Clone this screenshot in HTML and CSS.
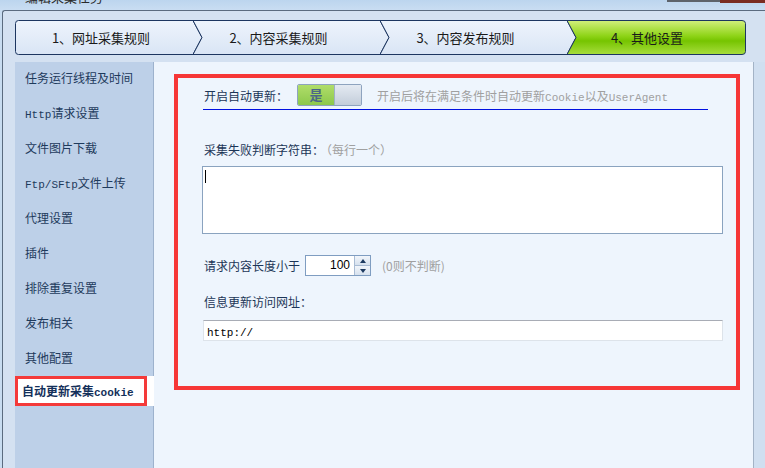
FILE: index.html
```html
<!DOCTYPE html>
<html lang="zh-CN">
<head>
    <meta charset="UTF-8">
    <title>其他设置</title>
    <link rel="stylesheet" href="styles.css">
</head>
<body>
    <div class="titlebar">
        <span class="title">编辑采集任务</span>
        <div class="caption-btns">
            <span class="cap-min"></span>
            <span class="cap-close"></span>
        </div>
    </div>
    <div class="window">
        <!-- 步骤条 -->
        <div class="steps">
            <svg class="steps-bg" width="731" height="35" viewBox="0 0 731 35">
                <defs>
                    <linearGradient id="gLight" x1="0" y1="0" x2="0" y2="1">
                        <stop offset="0" stop-color="#eef4fc"/>
                        <stop offset="1" stop-color="#d9e5f5"/>
                    </linearGradient>
                    <linearGradient id="gGreen" x1="0" y1="0" x2="0" y2="1">
                        <stop offset="0" stop-color="#d2f07c"/>
                        <stop offset="0.45" stop-color="#8fd418"/>
                        <stop offset="0.6" stop-color="#76c400"/>
                        <stop offset="1" stop-color="#a8de3e"/>
                    </linearGradient>
                </defs>
                <g stroke="#1d3660" stroke-width="1" stroke-linejoin="round">
                    <path fill="url(#gLight)" d="M3.5,0.5 H178 L187,17.5 L178,34.5 H3.5 Q0.5,34.5 0.5,31.5 V3.5 Q0.5,0.5 3.5,0.5 Z"/>
                    <path fill="url(#gLight)" d="M178,0.5 H365 L374,17.5 L365,34.5 H178 L187,17.5 Z"/>
                    <path fill="url(#gLight)" d="M365,0.5 H552 L561,17.5 L552,34.5 H365 L374,17.5 Z"/>
                    <path fill="url(#gGreen)" d="M552,0.5 H727 Q730.5,0.5 730.5,3.5 V31.5 Q730.5,34.5 727,34.5 H552 L561,17.5 Z"/>
                </g>
            </svg>
            <div class="step-labels">
                <span class="step">1、网址采集规则</span>
                <span class="step">2、内容采集规则</span>
                <span class="step">3、内容发布规则</span>
                <span class="step step-last">4、其他设置</span>
            </div>
        </div>

        <div class="main">
            <ul class="side-nav">
                <li>任务运行线程及时间</li>
                <li><span class="latin">Http</span>请求设置</li>
                <li>文件图片下载</li>
                <li><span class="latin">Ftp/SFtp</span>文件上传</li>
                <li>代理设置</li>
                <li>插件</li>
                <li>排除重复设置</li>
                <li>发布相关</li>
                <li>其他配置</li>
                <li class="active"><span class="mark">自动更新采集<span class="latin">cookie</span></span></li>
            </ul>

            <div class="panel">
                <div class="focus-box">
                    <div class="auto-row">
                        <span class="label">开启自动更新：</span>
                        <div class="toggle">
                            <span class="toggle-on">是</span>
                            <span class="toggle-off"></span>
                        </div>
                        <span class="hint">开启后将在满足条件时自动更新<span class="latin">Cookie</span>以及<span class="latin">UserAgent</span></span>
                    </div>

                    <div class="field-label">采集失败判断字符串：<span class="hint">（每行一个）</span></div>
                    <div class="textarea"><span class="caret"></span></div>

                    <div class="len-row">
                        <span class="label">请求内容长度小于</span>
                        <div class="spin">
                            <span class="spin-value">100</span>
                            <div class="spin-btns">
                                <span class="spin-up"></span>
                                <span class="spin-down"></span>
                            </div>
                        </div>
                        <span class="hint">(0则不判断)</span>
                    </div>

                    <div class="field-label url-label">信息更新访问网址：</div>
                    <div class="url-input"><span class="latin">http://</span></div>
                </div>
            </div>
            <div class="right-strip"></div>
        </div>
    </div>
</body>
</html>
```

FILE: styles.css
```css
body {
    margin: 0;
    width: 765px;
    height: 468px;
    overflow: hidden;
    background-color: #c8dcf0;
    font-family: "Noto Sans CJK SC", "Liberation Sans", sans-serif;
    font-size: 12px;
    color: #1c3557;
}
.latin {
    font-family: "Liberation Mono", "Noto Sans CJK SC", monospace;
    font-size: 11px;
}
.titlebar {
    height: 10px;
    overflow: hidden;
    display: flex;
    justify-content: space-between;
    background: linear-gradient(#bcd5ee, #c9ddf2);
}
.title {
    margin: -11px 0 0 25px;
    font-size: 13px;
    line-height: 16px;
    color: #2a2a2a;
}
.caption-btns {
    display: flex;
    align-items: flex-start;
}
.cap-min {
    width: 53px;
    height: 2px;
    background-color: #5d636b;
}
.cap-close {
    width: 45px;
    height: 3px;
    background-color: #7a2c22;
}
.window {
    margin-left: 2px;
    height: 457px;
    border-top: 1px solid #5b6b7f;
    border-left: 1px solid #5b6b7f;
    border-top-left-radius: 3px;
    background-color: #d4e1f1;
}
.steps {
    position: relative;
    margin: 9px 0 0 12px;
    width: 731px;
    height: 35px;
}
.steps-bg {
    position: absolute;
    left: 0;
    top: 0;
}
.step-labels {
    position: relative;
    display: flex;
    height: 35px;
}
.step {
    width: 187px;
    padding-right: 16px;
    box-sizing: border-box;
    text-align: center;
    line-height: 35px;
    font-size: 13px;
    color: #1a1a1a;
}
.step:first-child {
    width: 178px;
    padding-right: 6px;
}
.step-last {
    width: 179px;
    padding: 0 28px 0 9px;
}
.main {
    display: flex;
    margin-top: 7px;
    height: 406px;
}
.side-nav {
    list-style: none;
    margin: 0 0 0 12px;
    padding: 0;
    width: 138px;
    background-color: #bdd0e8;
    border-right: 1px solid #9db2cd;
}
.side-nav li {
    height: 35px;
    line-height: 31px;
    padding-left: 10px;
    box-sizing: border-box;
    color: #1e3a5c;
    white-space: nowrap;
}
.side-nav li.active {
    height: 30px;
    margin: -1px -1px 0 0;
    padding: 0;
    background-color: #ffffff;
}
.mark {
    display: block;
    width: 132px;
    height: 30px;
    box-sizing: border-box;
    border: 3px solid #f43a3a;
    padding-left: 4px;
    line-height: 23px;
    font-weight: bold;
    color: #14305a;
}
.panel {
    flex: 1;
    background-color: #eef5fd;
    border-right: 1px solid #a3b3c6;
}
.right-strip {
    width: 11px;
    background-color: #d0dff0;
}
.focus-box {
    width: 566px;
    height: 316px;
    margin: 12px 0 0 20px;
    padding-top: 6px;
    box-sizing: border-box;
    border: 4px solid #f63636;
}
.auto-row {
    display: flex;
    align-items: center;
    width: 504px;
    height: 22px;
    margin-left: 25px;
    padding: 0 0 3px 1px;
    border-bottom: 1px solid #0010e0;
}
.toggle {
    display: flex;
    width: 65px;
    height: 22px;
    margin-left: 9px;
    box-sizing: border-box;
    border: 1px solid #8ea3bf;
    border-radius: 2px;
    overflow: hidden;
}
.toggle-on {
    width: 36px;
    text-align: center;
    line-height: 20px;
    font-weight: bold;
    font-size: 13px;
    color: #4c6688;
    background: linear-gradient(#b0dd6a, #8cc84c);
}
.toggle-off {
    flex: 1;
    border-left: 1px solid #9fb1c6;
    background: linear-gradient(#e4eaf2, #c3cdda);
}
.hint {
    margin-left: 15px;
    color: #a0a0a0;
}
.field-label {
    margin: 32px 0 0 26px;
    line-height: 16px;
}
.field-label .hint {
    margin-left: 2px;
}
.textarea {
    width: 521px;
    height: 68px;
    margin: 8px 0 0 24px;
    box-sizing: border-box;
    border: 1px solid #8aa3bf;
    background-color: #ffffff;
    padding: 3px 0 0 2px;
}
.caret {
    display: block;
    width: 1px;
    height: 13px;
    background-color: #000000;
}
.len-row {
    display: flex;
    align-items: center;
    margin: 21px 0 0 26px;
    height: 21px;
}
.spin {
    display: flex;
    width: 66px;
    height: 21px;
    margin-left: 5px;
    box-sizing: border-box;
    border: 1px solid #7f9dc1;
    background-color: #ffffff;
}
.spin-value {
    flex: 1;
    text-align: right;
    padding-right: 4px;
    line-height: 19px;
    font-family: "Liberation Sans", sans-serif;
    font-size: 12px;
    color: #000000;
}
.spin-btns {
    display: flex;
    flex-direction: column;
    width: 15px;
    border-left: 1px solid #a9bcd4;
}
.spin-btns span {
    flex: 1;
    display: flex;
    align-items: center;
    justify-content: center;
    background: linear-gradient(#f2f6fb, #d6e1ee);
}
.spin-up {
    border-bottom: 1px solid #a9bcd4;
}
.spin-up::after {
    content: "";
    border: 3px solid transparent;
    border-bottom: 4px solid #1d3a60;
    border-top: 0;
}
.spin-down::after {
    content: "";
    border: 3px solid transparent;
    border-top: 4px solid #1d3a60;
    border-bottom: 0;
}
.len-row .hint {
    margin-left: 11px;
}
.url-label {
    margin-top: 18px;
}
.url-input {
    width: 520px;
    height: 21px;
    margin: 10px 0 0 25px;
    box-sizing: border-box;
    border: 1px solid #dde3ea;
    border-top-color: #a8acb5;
    background-color: #ffffff;
    padding-left: 3px;
    line-height: 19px;
    color: #000000;
}
```
